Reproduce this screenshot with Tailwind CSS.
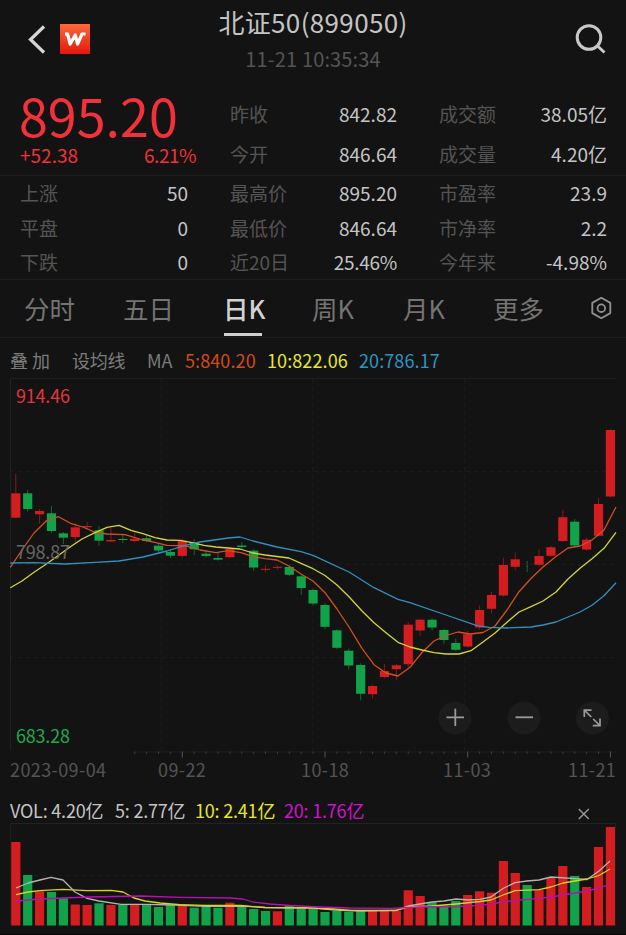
<!DOCTYPE html>
<html lang="zh-CN">

<head>
    <meta charset="UTF-8">
    <meta name="viewport" content="width=device-width, initial-scale=1.0">
    <title>北证50(899050)</title>
    <script src="https://cdn.jsdelivr.net/npm/@tailwindcss/browser@4"></script>
</head>

<body class="bg-[#131313] w-[626px] h-[935px] overflow-hidden font-['Noto_Sans_CJK_SC',sans-serif] text-[#c4c4c4]">

    <header class="flex justify-between h-[94px] pl-[26px] pr-[20px]">
        <div class="flex w-[66px] pt-[24px] h-[54px] gap-[14px]">
            <svg class="w-5 h-[30px]" viewBox="0 0 20 30" fill="none" stroke="#d6d6d6" stroke-width="3.2">
                <path d="M18 2.5 L4.5 15.5 L18 28.5" />
            </svg>
            <svg class="w-[30px] h-[30px]" viewBox="0 0 30 30">
                <defs>
                    <linearGradient id="logo" x1="0" y1="0" x2="0" y2="1">
                        <stop offset="0" stop-color="#fb6a3c" />
                        <stop offset="1" stop-color="#e3170c" />
                    </linearGradient>
                </defs>
                <rect width="30" height="30" fill="url(#logo)" />
                <path d="M5 10 H7.6 L10.2 20 L15.2 11 L17.6 20 L22 10 H25.5" fill="none" stroke="#fff"
                    stroke-width="3.2" stroke-linejoin="round" />
            </svg>
        </div>
        <div class="text-center whitespace-nowrap">
            <h1 class="text-[26px] leading-[43px] tracking-[0.35px]">北证50(899050)</h1>
            <p class="text-[20px] leading-[32px] tracking-[0.15px] text-[#545454]">11-21 10:35:34</p>
        </div>
        <div class="w-[72px] flex justify-end pt-[23px]">
            <svg class="w-[32px] h-[32px]" viewBox="0 0 32 32" fill="none" stroke="#c8c8c8" stroke-width="3">
                <circle cx="15" cy="14.5" r="11.8" />
                <path d="M23 22.5 L30.5 29.5" />
            </svg>
        </div>
    </header>

    <!-- QUOTE -->
    <section class="h-[82px] pl-[20px] flex border-b border-[#1d1d1d] text-[19px]">
        <div class="w-[176px] mr-[34px] text-[#f4303a]">
            <div class="text-[52px] leading-[44px] h-[48px] -ml-[1px] -mt-[1px]">895.20</div>
            <div class="flex justify-between leading-[28px]"><span>+52.38</span><span class="tracking-[-0.5px]">6.21%</span></div>
        </div>
        <div class="w-[167px] mr-[42px] leading-[40px]">
            <div class="flex justify-between"><span class="text-[#545454]">昨收</span><span>842.82</span></div>
            <div class="flex justify-between"><span class="text-[#545454]">今开</span><span>846.64</span></div>
        </div>
        <div class="w-[168px] leading-[40px]">
            <div class="flex justify-between"><span class="text-[#545454]">成交额</span><span>38.05亿</span></div>
            <div class="flex justify-between"><span class="text-[#545454]">成交量</span><span>4.20亿</span></div>
        </div>
    </section>
    <section class="h-[104px] pl-[20px] flex border-b border-[#1d1d1d] text-[19px] leading-[34.5px]">
        <div class="w-[168px] mr-[42px]">
            <div class="flex justify-between"><span class="text-[#545454]">上涨</span><span>50</span></div>
            <div class="flex justify-between"><span class="text-[#545454]">平盘</span><span>0</span></div>
            <div class="flex justify-between"><span class="text-[#545454]">下跌</span><span>0</span></div>
        </div>
        <div class="w-[167px] mr-[42px]">
            <div class="flex justify-between"><span class="text-[#545454]">最高价</span><span>895.20</span></div>
            <div class="flex justify-between"><span class="text-[#545454]">最低价</span><span>846.64</span></div>
            <div class="flex justify-between"><span class="text-[#545454]">近20日</span><span class="tracking-[-0.3px]">25.46%</span></div>
        </div>
        <div class="w-[168px]">
            <div class="flex justify-between"><span class="text-[#545454]">市盈率</span><span>23.9</span></div>
            <div class="flex justify-between"><span class="text-[#545454]">市净率</span><span>2.2</span></div>
            <div class="flex justify-between"><span class="text-[#545454]">今年来</span><span>-4.98%</span></div>
        </div>
    </section>

    <!-- TABS -->
    <nav class="flex h-[58px] pl-[24px] border-b border-[#1d1d1d] text-[25.5px] leading-[56px] text-[#747474]">
        <div class="w-[99px]">分时</div>
        <div class="w-[101px]">五日</div>
        <div class="w-[88px] text-[#d2d2d2] font-medium">
            <div class="h-[53px] -ml-[1px]">日K</div>
            <div class="w-[38px] h-[3px] bg-[#cfcfcf]"></div>
        </div>
        <div class="w-[91px]">周K</div>
        <div class="w-[90px]">月K</div>
        <div class="w-[96px]">更多</div>
        <svg class="w-[24px] h-[24px] mt-[16px]" viewBox="0 0 24 24" fill="none" stroke="#909090" stroke-width="1.8">
            <path d="M12.3 1.8 L21.3 6.9 V17.1 L12.3 22.2 L3.3 17.1 V6.9 Z" stroke-linejoin="round" />
            <circle cx="12.3" cy="12.2" r="3.8" />
        </svg>
    </nav>

    <div class="flex h-[40px] pl-[10px] text-[18px] leading-[45px] whitespace-nowrap text-[#7c7c7c]">
        <div class="w-[62px]">叠 加</div>
        <div class="w-[75px] tracking-[-0.2px]">设均线</div>
        <div class="w-[38px]">MA</div>
        <div class="w-[82px] text-[#d8481a] tracking-[0.1px]">5:840.20</div>
        <div class="w-[92px] text-[#e6e82c] tracking-[0.1px]">10:822.06</div>
        <div class="text-[#2f93c4] tracking-[0.1px]">20:786.17</div>
    </div>

    <!-- K LINE -->
    <div class="relative h-[380px]">
        <svg id="kline" class="block w-[626px] h-[380px]" viewBox="0 378 626 380"></svg>
        <div class="absolute left-[16px] top-[4px] text-[18px] leading-[26px] tracking-[-0.2px] text-[#e5343a]">914.46</div>
        <div class="absolute left-[16px] top-[160px] text-[18px] leading-[26px] tracking-[-0.2px] text-[#666]">798.87</div>
        <div class="absolute left-[16px] top-[344px] text-[18px] leading-[26px] tracking-[-0.2px] text-[#1faa50]">683.28</div>
        <div class="absolute left-[438px] top-[323px] flex gap-[35px]">
            <svg class="w-[34px] h-[34px]" viewBox="0 0 34 34" fill="none" stroke="#9a9a9a" stroke-width="1.8">
                <circle cx="17" cy="17" r="16.5" fill="#1c1c1c" stroke="none" />
                <path d="M8.5 16.3 H26 M17.3 7.7 V25" />
            </svg>
            <svg class="w-[34px] h-[34px]" viewBox="0 0 34 34" fill="none" stroke="#9a9a9a" stroke-width="1.8">
                <circle cx="17" cy="17" r="16.5" fill="#1c1c1c" stroke="none" />
                <path d="M8.5 16.3 H26" />
            </svg>
            <svg class="w-[34px] h-[34px]" viewBox="0 0 34 34" fill="none" stroke="#9a9a9a" stroke-width="1.7">
                <circle cx="16.5" cy="17" r="16.5" fill="#1c1c1c" stroke="none" />
                <path d="M8.3 16 V9.2 H15.5 M8.3 9.2 L15.3 16 M24 17.5 V24.7 H16.8 M24 24.7 L17.2 18" />
            </svg>
        </div>
    </div>

    <div class="flex h-[38px] pl-[10px] text-[18px] leading-[22px] tracking-[0.4px] whitespace-nowrap text-[#545454]">
        <div class="w-[148px]">2023-09-04</div>
        <div class="w-[143px]">09-22</div>
        <div class="w-[142px]">10-18</div>
        <div class="w-[125px]">11-03</div>
        <div>11-21</div>
    </div>

    <!-- VOLUME -->
    <div class="flex h-[27px] pl-[10px] text-[18px] leading-[29px] tracking-[-0.2px] whitespace-nowrap">
        <div class="w-[105px]">VOL: 4.20亿</div>
        <div class="w-[80px]">5: 2.77亿</div>
        <div class="w-[89px] text-[#e6e82c]">10: 2.41亿</div>
        <div class="w-[294px] text-[#cf14cf]">20: 1.76亿</div>
        <svg class="w-[12px] h-[12px] mt-[12px]" viewBox="0 0 12 12" fill="none" stroke="#9a9a9a" stroke-width="1.4">
            <path d="M0.8 1 L10.8 11 M10.8 1 L0.8 11" />
        </svg>
    </div>
    <svg id="volume" class="block w-[626px] h-[112px]" viewBox="0 823 626 112"></svg>

    <script>
        const RED = "#d41d20"
        const GREEN = "#12a24a"
        const STEP = 11.892
        const centerX = (i) => 15.8 + i * STEP

        // [color, body top, body bottom, high, low]
        const candles = [
            ["r", 493.3, 517.7, 473.7, 518.5], ["g", 493.3, 509, 490, 511.7], ["r", 511, 514.3, 509, 523.7],
            ["g", 513.3, 531, 506, 532.7], ["g", 533.3, 537.7, 532, 544], ["r", 527.3, 537, 523.3, 542.3],
            ["r", 526, 527.2, 522, 528.3], ["g", 530.3, 540.7, 526, 545.7], ["r", 540, 541.4, 528, 542],
            ["g", 539, 540, 534.7, 543.3], ["r", 538.7, 541, 532.3, 542.3], ["g", 538.2, 541, 535, 542.3],
            ["g", 545.7, 550.5, 543, 552.7], ["g", 552, 555.7, 550, 558], ["r", 540.7, 555.9, 538.3, 557.7],
            ["g", 542.3, 549.3, 539, 555], ["g", 553.7, 556, 550, 557.7], ["g", 558, 559.7, 552, 560.7],
            ["r", 549, 557.2, 547.7, 558], ["g", 545.5, 547, 542.3, 549.3], ["g", 550.7, 567.5, 549.3, 570.7],
            ["r", 568.8, 569.8, 565.3, 572.3], ["r", 566.8, 567.8, 565.3, 569.7], ["g", 567, 574.8, 565.7, 576.3],
            ["g", 576.3, 588, 575, 594.7], ["g", 590, 603.5, 588.7, 605.3], ["g", 605, 626.8, 603.3, 629.3],
            ["g", 630.3, 647.8, 629.3, 649], ["g", 650.7, 665.5, 648.7, 669.3], ["g", 665, 693.8, 663.3, 700.3],
            ["r", 686, 694.2, 684.7, 698.3], ["r", 671, 677, 664, 678], ["r", 665.3, 669.2, 664, 680.3],
            ["r", 624.7, 664.2, 622, 666.7], ["r", 619.7, 630.5, 619, 635.7], ["g", 619.7, 627.5, 618.3, 630.3],
            ["g", 630, 640, 628.7, 643.7], ["g", 643, 649.8, 638.7, 651.3], ["r", 634.3, 646.5, 631, 647.7],
            ["r", 610, 627.5, 605.7, 629.7], ["r", 595, 608.8, 592, 613.3], ["r", 565, 595.5, 557.7, 596.7],
            ["r", 559.3, 566.8, 552.3, 570.3], ["g", 566, 566.4, 561, 572], ["r", 556, 564.8, 549.3, 566],
            ["r", 547.3, 555.8, 546, 557], ["r", 517.2, 541, 510, 542], ["g", 521.7, 545.5, 519, 546.7],
            ["r", 539.7, 549.5, 537.7, 550.7], ["r", 504, 535.8, 498, 536.7], ["r", 430, 496.5, 428.7, 497.7],
        ]

        // [color, bar top]
        const volumes = [
            ["r", 842], ["g", 875], ["r", 891.3], ["g", 892], ["g", 898.3], ["r", 904.5], ["r", 905], ["g", 903.3],
            ["r", 905], ["g", 905], ["r", 904.3], ["g", 905], ["g", 907], ["g", 905], ["r", 904], ["g", 907.7],
            ["g", 905.3], ["g", 907.7], ["r", 902.7], ["g", 906], ["g", 909], ["g", 911], ["r", 911.3], ["g", 905],
            ["g", 907.3], ["g", 909], ["g", 912], ["g", 911], ["g", 911.7], ["g", 910.7], ["r", 910.7], ["r", 910.3],
            ["r", 910.7], ["r", 890.3], ["r", 896], ["g", 902.3], ["g", 905.7], ["g", 901], ["r", 895], ["r", 891.3],
            ["r", 892.7], ["r", 861], ["r", 873], ["g", 885], ["r", 890], ["r", 878], ["r", 866], ["g", 876],
            ["r", 887], ["r", 847], ["r", 827],
        ]

        const ma = [
            ["#d0501f", "10.3,567.3 22,550 34,533 46.5,520.7 58.5,516.7 70.5,523.3 83,527 95,532.3 107,534 125,534.7 143,540 155,542.3 167,545.3 185,545.7 200,550 216,552.7 228,550.7 241,552.7 253,556.7 265,558.7 277,560 289,566 301,574 313,581 325,592.7 337,609 349,627 362,648.3 374,664.7 386,673 398,676 410,667.3 422,652.5 434,641 446,635.5 458,632 470,634 483,632.5 495,626 507,610 519,591.7 531,578.5 543,567 556,556.5 568,548 580,546 592,540 604,530 616,507"],
            ["#d3d638", "10.3,587.7 22,581 34,572.3 46,564.3 58,555.7 70,547 82,539 95,532.7 107,527.3 119,525.3 131,530.3 143,533.7 155,537.7 167,540 180,540.3 192,542.7 204,545.3 216,547 240,549 253,553 265,555 289,558 301,563.3 313,568.7 325,575.5 337,585 349,596.7 362,611 374,622.7 386,632.7 398,642.3 410,647 422,650 434,652.7 446,654 459,654 471,650.7 483,642 495,633 507,622.3 519,612 531,606.7 543,601 556,592 568,579 580,568.3 592,558.7 604,548.3 616,532.3"],
            ["#3290c0", "10.3,563 34,562.7 65,564 95,562.3 119,561 143,557 167,551 185,545.3 200,542 228,538 240,537 253,541 277,547 301,551.7 313,555.3 349,572 374,587.7 398,599.3 410,602.7 446,615 477,625.7 489,627.3 507,628 531,627 543,625 556,622 568,617 580,612 592,605.3 604,595.7 616,582.7"],
        ]
        const volMa = [
            ["#b4b4b4", "16,888 28,883 40,880 51,877.3 63,880 75,892 87,898.3 99,901 121,904.3 145,904.3 175,905 205,906.3 240,906 265,907.5 290,908 313,908 335,910 360,911 396,910.5 408,906 420,904 432,902 444,901 456,899 468,900 480,899.3 491,897 503,888.5 515,882.7 527,881 539,880 551,877 575,878.7 587,879.5 599,871 610,861"],
            ["#d8d420", "16,894.7 28,892 40,890.7 63,889.3 87,890.7 111,890.3 123,892 134,898 145,901 160,903 180,904.7 205,905.3 240,905.5 265,907.5 300,907.7 335,909 350,910.3 396,910.3 408,907 432,906 456,904 480,901.5 491,900 503,895 515,890.7 539,889.7 551,887 563,883 575,881 587,879 599,875.5 610,869"],
            ["#b512b5", "16,901 28,900 40,899 63,898 90,897 140,896 180,897.3 230,898 243,899 253,902 270,904 290,905.5 320,907 350,908 390,908.3 420,907 456,906.5 480,905.3 491,904 503,902 515,900.3 539,898.3 551,897 563,895 575,893 587,891 599,888 610,884.3"],
        ]

        const line = (x1, y1, x2, y2, color, extra = "") =>
            `<line x1="${x1}" y1="${y1}" x2="${x2}" y2="${y2}" stroke="${color}" ${extra}/>`
        const polyline = ([color, points]) =>
            `<polyline points="${points}" fill="none" stroke="${color}" stroke-width="1.3" stroke-linejoin="round"/>`
        const dash = 'stroke-dasharray="4 4"'

        // K LINE
        let html = line(10.5, 378, 10.5, 750, "#222") + line(10, 378.5, 616, 378.5, "#1e1e1e")
        for (const y of [471.5, 564.5, 657.5]) html += line(10, y, 616, y, "#1b1b1b", dash)
        for (const x of [161.5, 312.5, 464.5]) html += line(x, 379, x, 750, "#1b1b1b", dash)
        html += line(134, 752, 616, 752, "#1e1e1e")
        for (let i = 10; i <= 50; i++) {
            const long = [14, 26, 38, 50].includes(i)
            html += line(centerX(i), 751.5, centerX(i), long ? 757.5 : 754, long ? "#555" : "#3c3c3c")
        }
        candles.forEach(([c, top, bottom, high, low], i) => {
            const color = c === "r" ? RED : GREEN
            const x = centerX(i)
            html += line(x, high, x, low, color, 'stroke-opacity="0.6"')
            const w = bottom - top < 0.5 ? 2 : 9.2
            html += `<rect x="${x - w / 2}" y="${top}" width="${w}" height="${bottom - top}" fill="${color}"/>`
        })
        html += ma.map(polyline).join("")
        document.getElementById("kline").innerHTML = html

        // VOLUME
        html = line(10, 823.5, 616, 823.5, "#222") + line(10.5, 823, 10.5, 926, "#1c1c1c") + line(615.5, 823, 615.5, 926, "#1c1c1c")
        html += line(10, 875.5, 616, 875.5, "#1b1b1b", dash)
        volumes.forEach(([c, top], i) => {
            html += `<rect x="${centerX(i) - 4.6}" y="${top}" width="9.2" height="${925.5 - top}" fill="${c === "r" ? RED : GREEN}"/>`
        })
        html += volMa.map(polyline).join("") + line(0, 934.5, 626, 934.5, "#050505")
        document.getElementById("volume").innerHTML = html
    </script>
</body>

</html>
